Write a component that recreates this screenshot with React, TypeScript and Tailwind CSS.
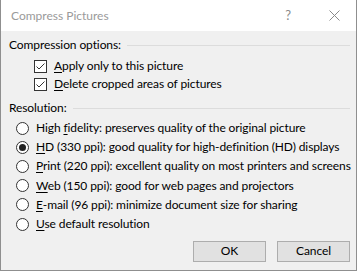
import React from "react"

const font = { fontFamily: '"Segoe UI", Lato, "Noto Sans", sans-serif' }

function Key({ text, at }: { text: string; at: number }) {
  return (
    <>
      {text.slice(0, at)}
      <span className="underline underline-offset-2">{text[at]}</span>
      {text.slice(at + 1)}
    </>
  )
}

function CheckBox() {
  return (
    <span className="w-[13px] h-[13px] border border-[#333] bg-white shrink-0 flex items-center justify-center">
      <svg width="11" height="11" viewBox="0 0 11 11">
        <path d="M1.5 5.5 L4 8 L9.5 2.5" fill="none" stroke="#333" strokeWidth="1" />
      </svg>
    </span>
  )
}

function Radio({ on }: { on?: boolean }) {
  return (
    <span className="w-[13px] h-[13px] rounded-full border border-[#333] bg-white shrink-0 flex items-center justify-center">
      {on && <span className="w-[7px] h-[7px] rounded-full bg-[#222]" />}
    </span>
  )
}

function Header({ label }: { label: string }) {
  return (
    <div className="flex items-center h-[16px] pl-2 pr-[6px]">
      <span>{label}</span>
      <span className="flex-1 h-px bg-[#dcdcdc] ml-[6px]" />
    </div>
  )
}

const resolutions = [
  { text: "High fidelity: preserves quality of the original picture", key: 5 },
  { text: "HD (330 ppi): good quality for high-definition (HD) displays", key: 0, on: true },
  { text: "Print (220 ppi): excellent quality on most printers and screens", key: 0 },
  { text: "Web (150 ppi): good for web pages and projectors", key: 0 },
  { text: "E-mail (96 ppi): minimize document size for sharing", key: 0 },
  { text: "Use default resolution", key: 0 },
]

export default function App() {
  return (
    <div className="w-[357px] h-[271px] flex flex-col bg-[#f0f0f0] border-x border-b border-[#8f8f8f] text-[12px] tracking-[-0.1px] text-black" style={font}>
      {/* Title bar */}
      <div className="h-[31px] bg-white flex items-center shrink-0">
        <span className="pl-[10px] text-[#9a9a9a] text-[12px] tracking-normal">Compress Pictures</span>
        <span className="ml-auto text-[#8a8a8a] text-[13px] mr-[38px]">?</span>
        <svg width="11" height="11" viewBox="0 0 11 11" className="mr-[16px]">
          <path d="M0.5 0.5 L10.5 10.5 M10.5 0.5 L0.5 10.5" stroke="#8a8a8a" strokeWidth="1" />
        </svg>
      </div>

      <div className="mt-[6px]">
        <Header label="Compression options:" />
      </div>
      <div className="mt-[4px] flex flex-col pl-[33px]">
        <div className="h-[18px] flex items-center gap-[7px]">
          <CheckBox />
          <span><Key text="Apply only to this picture" at={0} /></span>
        </div>
        <div className="h-[18px] flex items-center gap-[7px]">
          <CheckBox />
          <span><Key text="Delete cropped areas of pictures" at={0} /></span>
        </div>
      </div>

      <div className="mt-[7px]">
        <Header label="Resolution:" />
      </div>
      <div className="mt-[2.5px] flex flex-col pl-[15px]">
        {resolutions.map((r) => (
          <div key={r.text} className="h-[19.2px] flex items-center gap-[7px]">
            <Radio on={r.on} />
            <span className="whitespace-nowrap"><Key text={r.text} at={r.key} /></span>
          </div>
        ))}
      </div>

      <div className="mt-[7px] flex justify-end gap-[11px] pr-[6px]">
        <button className="w-[73px] h-[21px] bg-[#e1e1e1] border border-[#adadad] text-[12px]">OK</button>
        <button className="w-[73px] h-[21px] bg-[#e1e1e1] border border-[#adadad] text-[12px]">Cancel</button>
      </div>
    </div>
  )
}
